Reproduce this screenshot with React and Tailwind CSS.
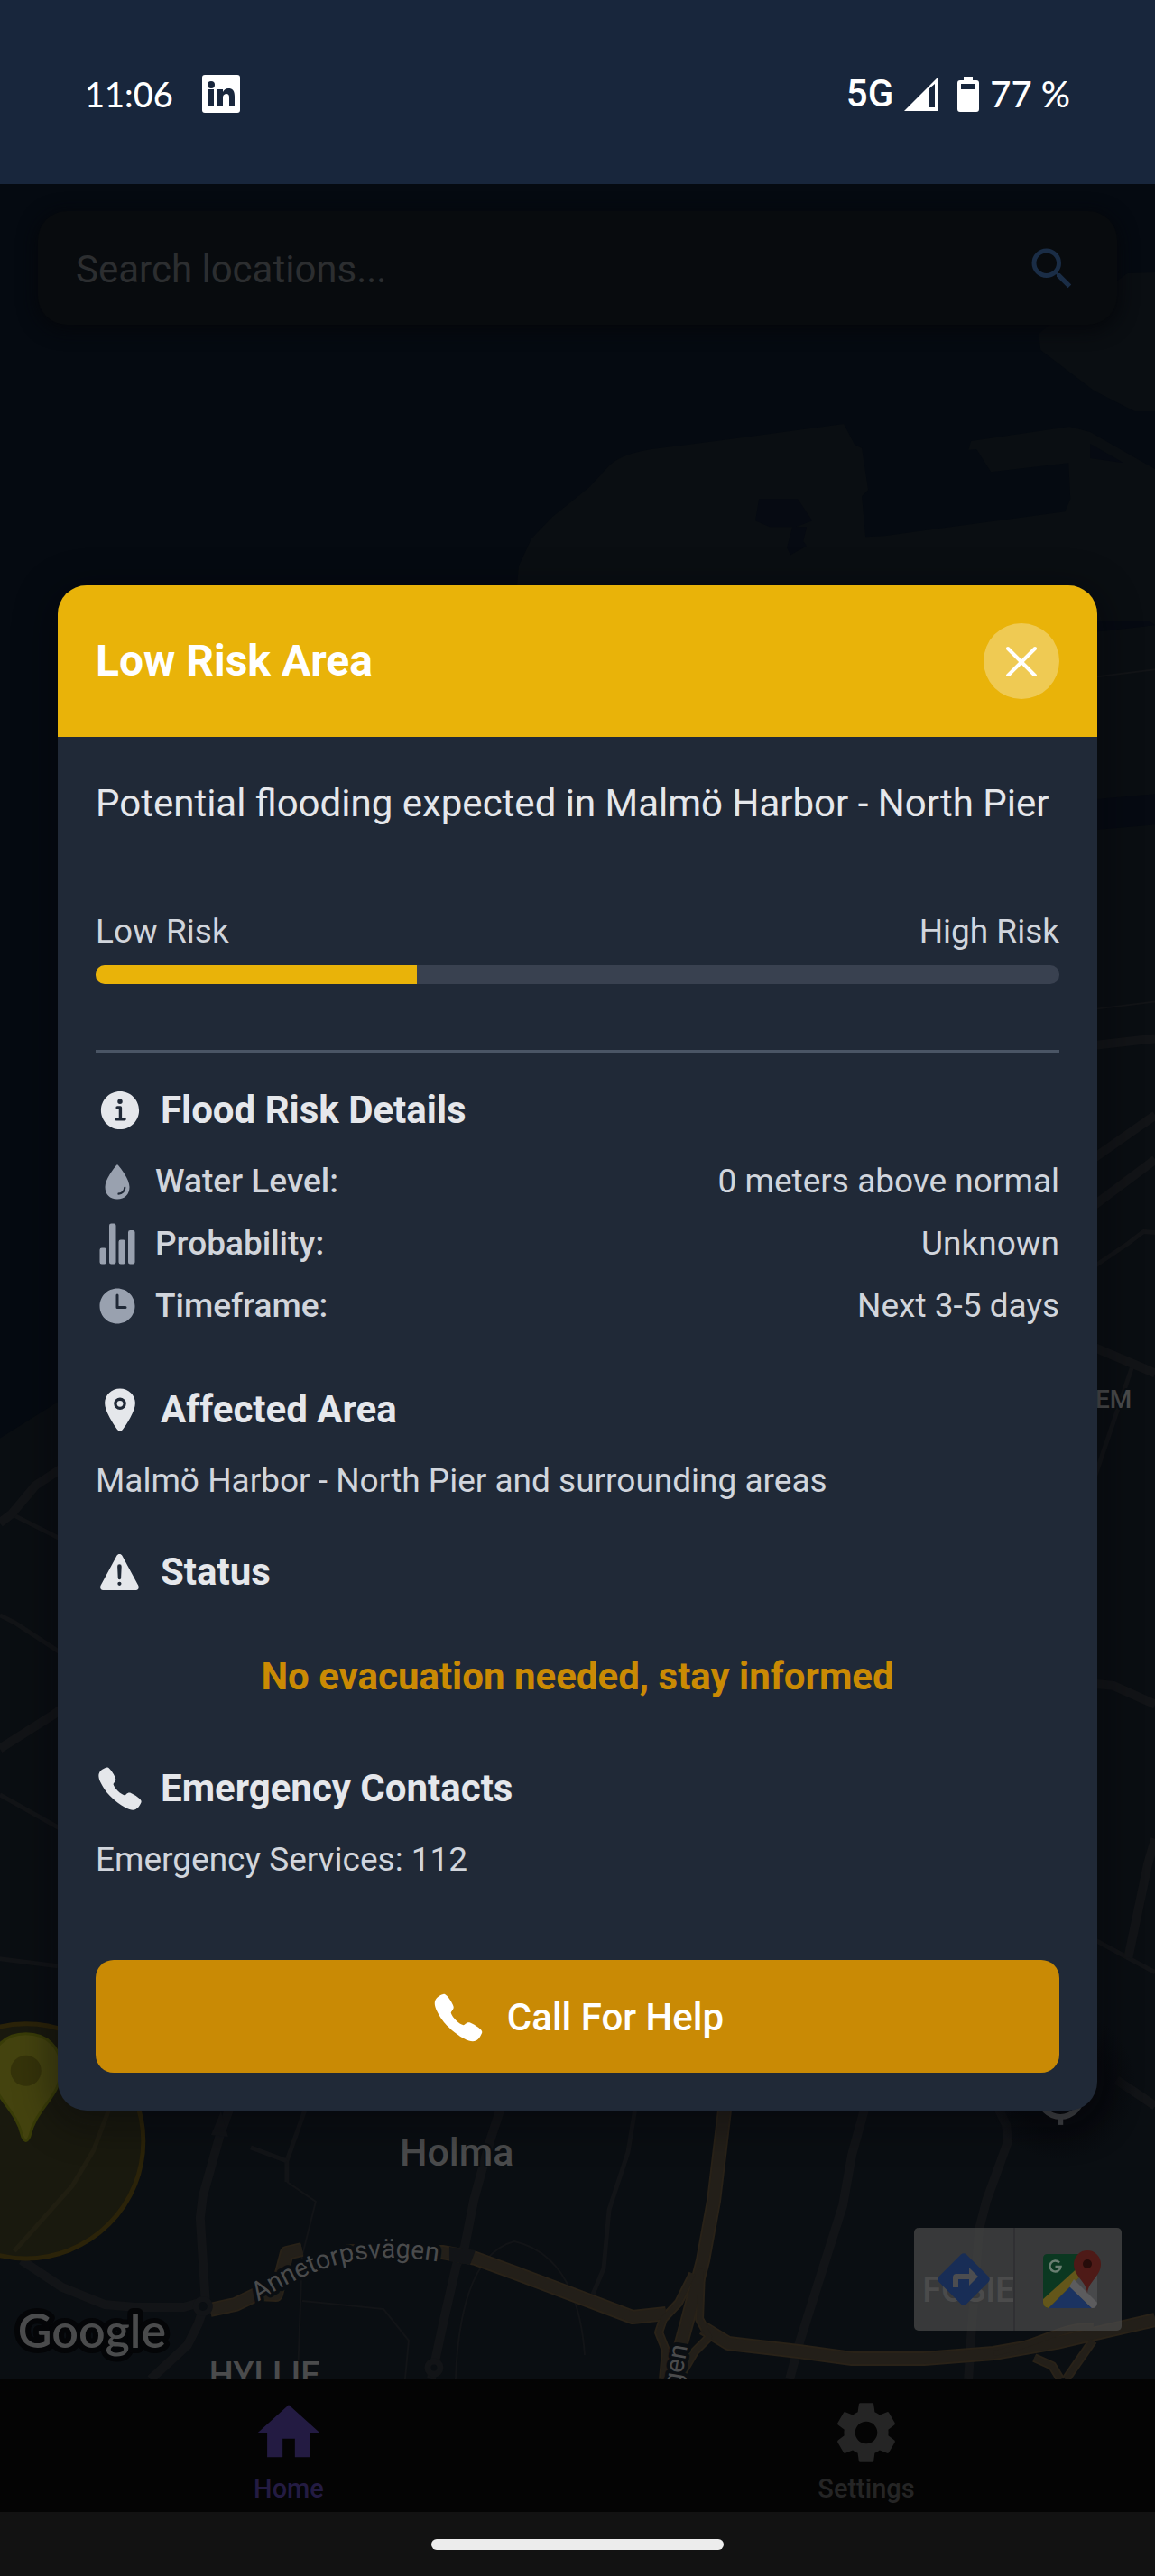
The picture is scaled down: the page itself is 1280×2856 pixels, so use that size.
import React from "react";
import {
  IoCall,
  IoInformationCircle,
  IoLocation,
  IoStatsChart,
  IoTime,
  IoWarning,
  IoWater,
} from "react-icons/io5";
import { MdHome, MdSearch, MdSettings } from "react-icons/md";

const majorRoads = [
  "M233 2560 L261 2554 L286 2542 L306 2543 L318 2497 L335 2493",
  "M384 2495 L490 2496 L527 2503 L571 2519 L640 2545 L701 2568 L738 2564",
  "M779 2580 L807 2597 L885 2606 L944 2614 L1024 2614 L1101 2608 L1171 2596 L1280 2571",
  "M804 2330 L791 2439 L779 2505 L762 2571 L744 2637",
];

const rampRoads = [
  "M777 2515 L775 2570 L786 2590 L770 2606 L752 2637",
  "M768 2520 L752 2552 L735 2570 L730 2585 L738 2605 L735 2637",
  "M1146 2613 L1166 2622 L1175 2637",
  "M1211 2594 L1181 2637",
  "M1101 2608 C1150 2600 1180 2575 1211 2580",
];

const wideRoads = [
  "M257 2330 L244 2366 L225 2434 L222 2458 L228 2552 L220 2575 L208 2599 L167 2637",
  "M24 2505 L69 2535 L116 2554 L151 2557 L204 2557 L228 2550",
  "M557 2330 L543 2373 L525 2439 L515 2490 L506 2510 L492 2571 L481 2622 L478 2637",
  "M960 2330 L944 2388 L934 2444 L885 2599 L875 2637",
  "M1103 2330 L1115 2355 L1117 2373 L1093 2439 L1085 2470 L1076 2589 L1073 2637",
  "M1200 1160 L1280 1151",
  "M1200 1292 L1280 1236",
  "M1200 1345 L1280 1285",
  "M1200 1488 L1280 1522",
  "M1200 1865 L1233 1868 L1280 1889",
  "M1250 2170 L1272 2065 L1280 2038",
  "M1237 2305 L1280 2334",
  "M0 1938 L60 1900 L80 1885",
  "M0 1688 L13 1678 L40 1646 L80 1620",
];

const thinRoads = [
  "M341 2330 L318 2395 L318 2418",
  "M278 2380 L318 2395",
  "M705 2330 L696 2385 L675 2449 L669 2514 L656 2545",
  "M1200 1412 L1250 1378 L1267 1365 L1280 1366",
  "M1255 1513 L1212 1640",
  "M1200 2143 L1250 2170 L1280 2186",
  "M17 1680 L80 1712",
  "M0 1790 L16 1798 L80 1840",
  "M0 1989 L80 2034",
  "M0 2171 L64 2179",
  "M122 2335 L104 2383 L80 2423 L16 2495",
];

const paths = [
  "M335 2550 L376 2554 L425 2559 L453 2594 L449 2637",
  "M318 2418 L350 2440 L335 2500 L330 2637",
  "M1200 752 L1280 742",
  "M1200 1120 L1280 1110",
  "M505 2637 Q510 2500 570 2484 Q640 2500 648 2610",
];

function CityMap() {
  return (
    <svg
      className="absolute inset-0 h-full w-full font-[Roboto,sans-serif]"
      viewBox="0 204 1280 2433"
      preserveAspectRatio="xMidYMax slice"
      aria-label="Map of Malmö"
    >
      <defs>
        <radialGradient id="fab-shade">
          <stop offset="0.6" stopColor="#07090d" />
          <stop offset="1" stopColor="#07090d" stopOpacity="0" />
        </radialGradient>
      </defs>
      <rect y="204" width="1280" height="2433" fill="#050a11" />
      <path
        d="M0 1594 L80 1544 L400 1300 L573 800 L573 649 L575 627 L589 597 L612 573 L653 540 L676 515 Q690 503 722 498 L816 486 L935 470 L947 493 L955 497 L962 543 L955 550 L959 595 L980 594 L1180 567 L1186 553 L1184 513 L1098 523 L1082 498 L1073 499 L1076 489 L1185 473 L1208 479 L1280 520 L1280 2637 L0 2637 Z"
        fill="#0a0e12"
      />
      <path d="M1280 302 L1249 303 L1200 340 L1163 360 L1151 370 L1153 388 L1212 433 L1257 456 L1280 456 Z" fill="#0a0e12" />
      <path
        d="M841 553 L884 553 L900 577 L882 584 L894 584 L890 600 L894 605 L876 615 L872 607 L878 584 L853 584 L837 577 Z M1208 492 L1245 513 L1208 508 Z M1200 887 L1280 880 L1280 914 L1200 921 Z M1200 688 L1273 688 L1280 693 L1200 702 Z"
        fill="#060a12"
      />
      <g fill="none" strokeLinejoin="round">
        <g stroke="#121417">
          {paths.map((d) => (
            <path key={d} d={d} strokeWidth="2" />
          ))}
          {thinRoads.map((d) => (
            <path key={d} d={d} strokeWidth="5" />
          ))}
          {wideRoads.map((d) => (
            <path key={d} d={d} strokeWidth="10" />
          ))}
        </g>
        <g stroke="#292218">
          {majorRoads.map((d) => (
            <path key={d} d={d} strokeWidth="16" />
          ))}
          {rampRoads.map((d) => (
            <path key={d} d={d} strokeWidth="10" />
          ))}
        </g>
        <g stroke="#231f19">
          {majorRoads.map((d) => (
            <path key={d} d={d} strokeWidth="12" />
          ))}
          {rampRoads.map((d) => (
            <path key={d} d={d} strokeWidth="6" />
          ))}
        </g>
      </g>
      <path d="M234 2366 L245 2340 L253 2368 Z" fill="#121417" />
      <circle cx="225" cy="2556" r="8" fill="#0a0e12" stroke="#121417" strokeWidth="6" />
      <circle cx="481" cy="2624" r="7" fill="#0a0e12" stroke="#121417" strokeWidth="7" />
      <path d="M498 2490 L527 2494 L521 2510 L498 2506 Z" fill="#121417" />

      <circle cx="29" cy="2373" r="130" fill="#524400" fillOpacity="0.22" stroke="#2b2309" strokeWidth="5" />
      <path
        d="M29 2254 C5 2254 -10 2270 -10 2292 C-10 2325 18 2335 25 2368 Q29 2377 33 2368 C40 2335 68 2325 68 2292 C68 2270 53 2254 29 2254 Z"
        fill="#44430f"
        stroke="#393c08"
        strokeWidth="3"
      />
      <circle cx="29" cy="2295" r="17" fill="#35330a" />

      <circle cx="1175" cy="2310" r="84" fill="url(#fab-shade)" />
      <circle cx="1175" cy="2322" r="24" fill="none" stroke="#414346" strokeWidth="6" />
      <path d="M1175 2346 V2355" stroke="#414346" strokeWidth="6" />

      <path id="annetorp" d="M286 2551 Q362 2501 433 2502 Q470 2502 520 2513" fill="none" />
      <g fill="#4a4b4c" stroke="#0a0e12" paintOrder="stroke" strokeLinejoin="round">
        <text fontSize="29" strokeWidth="8">
          <textPath href="#annetorp">Annetorpsvägen</textPath>
        </text>
        <text x="762" y="2600" fontSize="29" strokeWidth="8" textAnchor="end" transform="rotate(-80 762 2600)">
          gen
        </text>
        <text x="443" y="2400" fontSize="43" fontWeight="500" strokeWidth="4">Holma</text>
        <text x="232" y="2645" fontSize="38" fontWeight="500" strokeWidth="4">HYLLIE</text>
        <text x="1254" y="1560" fontSize="28" fontWeight="500" strokeWidth="4" textAnchor="end">EM</text>
        <text x="20" y="2602" fontSize="52" fontWeight="600" strokeWidth="12" stroke="#040507" className="font-[Lato,sans-serif]">
          Google
        </text>
        <text x="1022" y="2551" fontSize="38" fontWeight="500" strokeWidth="4">FOSIE</text>
      </g>
    </svg>
  );
}

function StatusBar() {
  return (
    <header className="flex h-[204px] items-center justify-between bg-[#18263c] px-[94px] pt-1 font-[Lato,sans-serif] text-[40px] leading-[48px] font-medium text-white">
      <div className="flex items-center gap-8">
        <span className="text-[38px]">11:06</span>
        <svg className="size-[42px]" viewBox="0 0 42 42" aria-label="LinkedIn">
          <rect width="42" height="42" rx="3" fill="#fff" />
          <g fill="#18263c">
            <circle cx="10" cy="11" r="4" />
            <path d="M7 16h6v19H7zM17 16h6v3c1-2 3-4 6-4 5 0 7 3 7 9v11h-6V25c0-3-1-4-3-4s-4 1-4 4v10h-6z" />
          </g>
        </svg>
      </div>
      <div className="flex items-center">
        <span className="font-[Roboto,sans-serif] text-[42px]">5G</span>
        <svg className="ml-3 size-[38px]" viewBox="0 0 38 38" aria-label="Signal">
          <path fillRule="evenodd" d="M38 0V38H0ZM28 13V34H34V8Z" fill="#fff" />
        </svg>
        <svg className="ml-[21px] h-[39px] w-6" viewBox="0 0 24 39" aria-label="Battery">
          <path fillRule="evenodd" d="M7 0h10v4h4q3 0 3 3v29q0 3-3 3H3q-3 0-3-3V7q0-3 3-3h4zM4 8v6h16V8z" fill="#fff" />
        </svg>
        <span className="ml-3">77 %</span>
      </div>
    </header>
  );
}

function SearchBox() {
  return (
    <form
      role="search"
      className="relative mx-[42px] mt-[30px] flex h-[126px] items-center rounded-[32px] bg-[#080b0e] pt-[2px] pr-[42px] pl-[42px] shadow-[0_4px_20px_2px_#05070b]"
      onSubmit={(e) => e.preventDefault()}
    >
      <input
        type="text"
        aria-label="Search locations"
        placeholder="Search locations..."
        className="min-w-0 flex-1 bg-transparent text-[42px] text-[#2c2e30] outline-none placeholder:text-[#2c2e30]"
      />
      <button type="submit" aria-label="Search" className="text-[#1a2d46]">
        <MdSearch className="size-[60px]" />
      </button>
    </form>
  );
}

function SectionTitle({ icon: Icon, children }) {
  return (
    <h3 className="flex h-14 items-center gap-[18px] text-[42px] leading-[56px] font-bold text-gray-200">
      <Icon className="size-[54px] shrink-0" />
      {children}
    </h3>
  );
}

const details = [
  { icon: IoWater, label: "Water Level:", value: "0 meters above normal" },
  { icon: IoStatsChart, label: "Probability:", value: "Unknown" },
  { icon: IoTime, label: "Timeframe:", value: "Next 3-5 days" },
];

function RiskDialog() {
  const level = 33.3;
  return (
    <section
      role="dialog"
      aria-labelledby="risk-title"
      className="relative mx-16 mt-[289px] mb-[298px] overflow-hidden rounded-[32px] bg-[#202937] shadow-[0_10px_40px_8px_rgba(4,6,10,0.4)]"
    >
      <div className="flex h-[168px] items-center justify-between bg-[#e9b309] px-[42px]">
        <h2 id="risk-title" className="text-[48px] font-bold text-white">
          Low Risk Area
        </h2>
        <button type="button" aria-label="Close" className="flex size-[84px] items-center justify-center rounded-full bg-white/30 text-white">
          <svg className="size-[34px]" viewBox="0 0 34 34" fill="none" stroke="currentColor" strokeWidth="4" strokeLinecap="round">
            <path d="M2 3L32 33M32 3L2 33" />
          </svg>
        </button>
      </div>
      <div className="p-[42px] text-[37px] leading-[52px] text-gray-300">
        <p className="text-[42px] leading-[63px] text-gray-200">Potential flooding expected in Malmö Harbor - North Pier</p>

        <div className="mt-[85px] flex justify-between">
          <span>Low Risk</span>
          <span>High Risk</span>
        </div>
        <div role="meter" aria-label="Risk level" aria-valuenow={level} className="mt-[11px] h-[21px] overflow-hidden rounded-[10px] bg-[#394150]">
          <div className="h-full bg-[#e9b309]" style={{ width: `${level}%` }} />
        </div>

        <hr className="mt-[73px] border-t-[3px] border-gray-600" />

        <div className="mt-9">
          <SectionTitle icon={IoInformationCircle}>Flood Risk Details</SectionTitle>
          <dl className="mt-[25px] flex flex-col gap-[17px]">
            {details.map(({ icon: Icon, label, value }) => (
              <div key={label} className="flex items-center justify-between">
                <dt className="flex items-center gap-[18px] font-medium">
                  <Icon className="size-12 text-gray-400" />
                  {label}
                </dt>
                <dd>{value}</dd>
              </div>
            ))}
          </dl>
        </div>

        <div className="mt-[61px]">
          <SectionTitle icon={IoLocation}>Affected Area</SectionTitle>
          <p className="mt-[25px]">Malmö Harbor - North Pier and surrounding areas</p>
        </div>

        <div className="mt-[47px]">
          <SectionTitle icon={IoWarning}>Status</SectionTitle>
          <p className="mt-14 text-center text-[42px] leading-[63px] font-bold text-[#ca8a04]">No evacuation needed, stay informed</p>
        </div>

        <div className="mt-[65px]">
          <SectionTitle icon={IoCall}>Emergency Contacts</SectionTitle>
          <p className="mt-[25px]">Emergency Services: 112</p>
        </div>

        <button
          type="button"
          className="mt-[85px] flex h-[125px] w-full items-center justify-center gap-6 rounded-[20px] bg-[#c98a05] pt-[2px] text-[42px] font-medium text-white"
        >
          <IoCall className="size-[60px]" />
          Call For Help
        </button>
      </div>
    </section>
  );
}

function MapToolbar() {
  return (
    <div className="absolute right-[37px] bottom-[54px] flex h-[114px] w-[230px] divide-x-2 divide-[#303033] rounded-[5px] bg-[#4b4b4b]/70">
      <button type="button" aria-label="Directions" className="flex flex-1 items-center justify-center">
        <svg className="size-[60px]" viewBox="0 0 60 60">
          <path d="M27 2.500Q30 0 33 2.500L57.500 27Q60 30 57.500 33L33 57.500Q30 60 27 57.500L2.500 33Q0 30 2.500 27Z" fill="#182d56" />
          <path d="M18 39V28q0-4 4-4h14v-7l10 10-10 10v-7H24v9z" fill="#4c4d50" />
        </svg>
      </button>
      <button type="button" aria-label="Open in Google Maps" className="flex flex-1 items-center justify-center pl-2">
        <svg className="size-[68px]" viewBox="0 0 68 68">
          <path d="M2 56V11q0-5 5-5h40L53 20 8 66q-6-1-6-6z" fill="#0b3821" />
          <path d="M32 42L62 12V60q0 6-6 6H54z" fill="#48494b" />
          <path d="M32 42L8 66H56z" fill="#1b3361" />
          <path d="M2 56L44 18V30L8 66q-6-1-6-6z" fill="#63561a" />
          <path d="M36 34L62 60q-1 6-6 6L31 42z" fill="#5c5c5e" />
          <path d="M51 50C50 36 36 31 36 17a15 15 0 0 1 30 0C66 31 52 36 51 50Z" fill="#4e1a17" />
          <circle cx="51" cy="17" r="5" fill="#260c0a" />
          <path d="M20 15.500A6 6 0 1 0 21.500 20H15.500" fill="none" stroke="#6a7f72" strokeWidth="2.500" />
        </svg>
      </button>
    </div>
  );
}

function TabBar() {
  return (
    <nav className="relative flex h-[147px] bg-[#040404] text-[29px] leading-[34px] font-medium">
      <a href="#home" className="flex flex-1 flex-col items-center gap-1 pt-[18px] text-[#231b42]">
        <MdHome className="size-[82px]" />
        Home
      </a>
      <a href="#settings" className="flex flex-1 flex-col items-center gap-1 pt-[18px] text-[#252525]">
        <MdSettings className="size-[82px]" />
        Settings
      </a>
    </nav>
  );
}

export default function App() {
  return (
    <div className="flex min-h-screen flex-col bg-[#050a11] font-[Roboto,sans-serif]">
      <StatusBar />
      <main className="relative flex flex-1 flex-col overflow-hidden">
        <CityMap />
        <SearchBox />
        <RiskDialog />
        <MapToolbar />
      </main>
      <TabBar />
      <div className="flex h-[72px] items-center justify-center bg-[#121212]">
        <div className="h-3 w-[324px] rounded-full bg-[#ececec]" />
      </div>
    </div>
  );
}
